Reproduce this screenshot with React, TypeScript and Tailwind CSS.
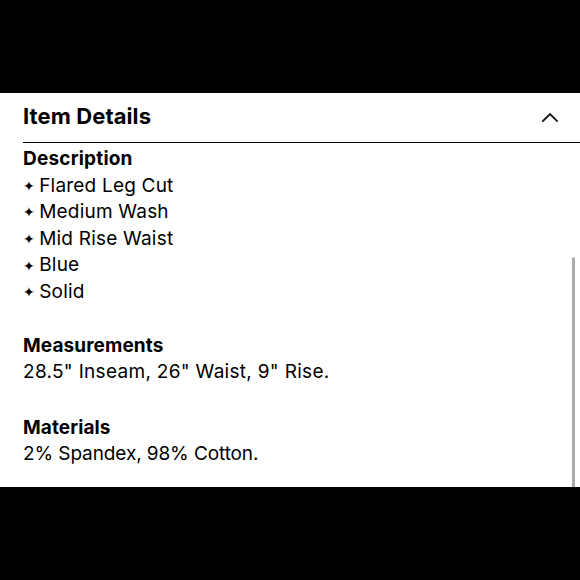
import React from 'react'

const bullets = ['Flared Leg Cut', 'Medium Wash', 'Mid Rise Waist', 'Blue', 'Solid']

export default function App() {
  return (
    <div className="w-[580px] h-[580px] bg-black flex flex-col" style={{ fontFamily: 'Inter, "Liberation Sans", sans-serif' }}>
      <div className="h-[93px] shrink-0" />
      <div className="relative h-[394px] shrink-0 bg-white text-black overflow-hidden">
        {/* header */}
        <div className="ml-[23px] h-[50px] flex items-center justify-between border-b border-black pr-[23px]">
          <h2 className="text-[22px] font-bold tracking-[0.1px] -mt-[3px]">Item Details</h2>
          <svg width="18" height="12" viewBox="0 0 18 12" fill="none" className="mr-[-2px] -mt-[2px]">
            <path d="M2 10 L9 3 L16 10" stroke="#111" strokeWidth="1.8" strokeLinecap="square" />
          </svg>
        </div>

        <div className="px-[23px] pt-[3px] text-[19px] leading-[26.6px] tracking-[0.2px]">
          <h3 className="font-bold tracking-[0.2px]">Description</h3>
          <ul>
            {bullets.map(b => (
              <li key={b} className="flex items-center gap-[4px]">
                <span className="text-[14px] leading-none">✦</span>
                <span>{b}</span>
              </li>
            ))}
          </ul>

          <h3 className="font-bold tracking-[0.1px] mt-[27px]">Measurements</h3>
          <p className="tracking-[0.3px]">28.5" Inseam, 26" Waist, 9" Rise.</p>

          <h3 className="font-bold tracking-[0.1px] mt-[29px]">Materials</h3>
          <p className="tracking-[-0.1px]">2% Spandex, 98% Cotton.</p>
        </div>

        {/* scrollbar */}
        <div className="absolute right-[5px] top-[164px] bottom-0 w-[3px] rounded-t-full bg-[#aaaaaa]" />
      </div>
    </div>
  )
}
